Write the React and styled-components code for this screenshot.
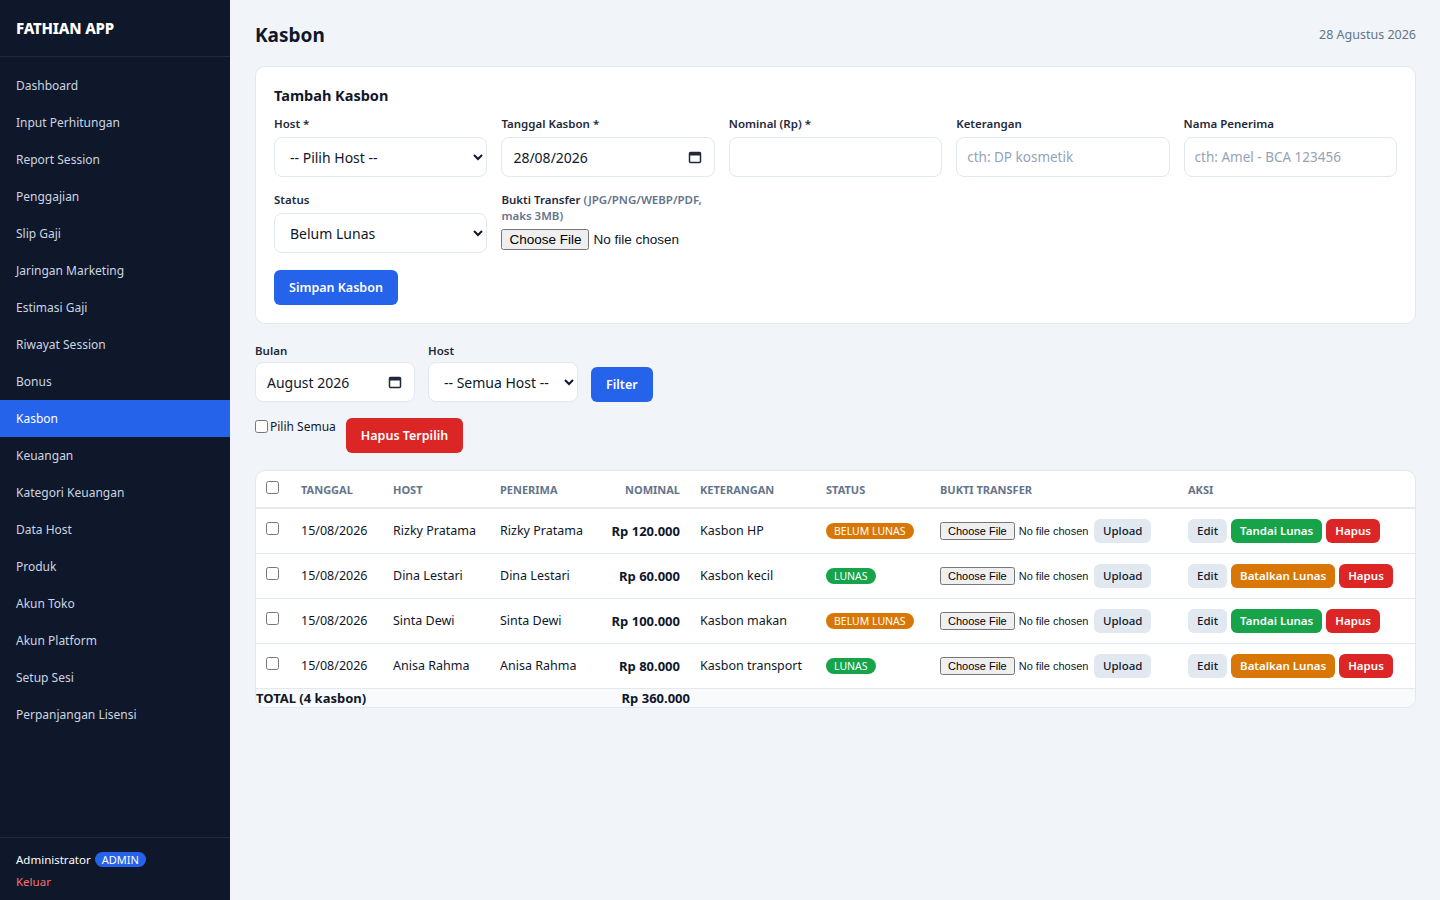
import React from "react";
import styled, { createGlobalStyle } from "styled-components";

const menu = [
  "Dashboard",
  "Input Perhitungan",
  "Report Session",
  "Penggajian",
  "Slip Gaji",
  "Jaringan Marketing",
  "Estimasi Gaji",
  "Riwayat Session",
  "Bonus",
  "Kasbon",
  "Keuangan",
  "Kategori Keuangan",
  "Data Host",
  "Produk",
  "Akun Toko",
  "Akun Platform",
  "Setup Sesi",
  "Perpanjangan Lisensi",
];

const rows = [
  { tgl: "15/08/2026", host: "Rizky Pratama", nominal: "Rp 120.000", ket: "Kasbon HP", lunas: false },
  { tgl: "15/08/2026", host: "Dina Lestari", nominal: "Rp 60.000", ket: "Kasbon kecil", lunas: true },
  { tgl: "15/08/2026", host: "Sinta Dewi", nominal: "Rp 100.000", ket: "Kasbon makan", lunas: false },
  { tgl: "15/08/2026", host: "Anisa Rahma", nominal: "Rp 80.000", ket: "Kasbon transport", lunas: true },
];

function CalendarIcon() {
  return (
    <svg width="14" height="14" viewBox="0 0 14 14">
      <rect x="1.5" y="2.5" width="11" height="10" rx="1" fill="none" stroke="#1f2937" strokeWidth="1.5" />
      <rect x="1.5" y="2.5" width="11" height="3" fill="#1f2937" />
    </svg>
  );
}

export default function App() {
  return (
    <>
      <GlobalStyle />
      <Layout>
        <Sidebar>
          <Brand>FATHIAN APP</Brand>
          <Nav>
            {menu.map((m) => (
              <NavItem key={m} $active={m === "Kasbon"}>
                {m}
              </NavItem>
            ))}
          </Nav>
          <SideFooter>
            <UserLine>
              Administrator <RoleBadge>ADMIN</RoleBadge>
            </UserLine>
            <Logout>Keluar</Logout>
          </SideFooter>
        </Sidebar>
        <Main>
          <TopBar>
            <h1>Kasbon</h1>
            <span>28 Agustus 2026</span>
          </TopBar>

          <Card>
            <CardTitle>Tambah Kasbon</CardTitle>
            <FormGrid>
              <Field>
                <Label>Host *</Label>
                <Select defaultValue="">
                  <option value="">-- Pilih Host --</option>
                </Select>
              </Field>
              <Field>
                <Label>Tanggal Kasbon *</Label>
                <DateBox>
                  <input readOnly value="28/08/2026" />
                  <CalendarIcon />
                </DateBox>
              </Field>
              <Field>
                <Label>Nominal (Rp) *</Label>
                <TextInput />
              </Field>
              <Field>
                <Label>Keterangan</Label>
                <TextInput placeholder="cth: DP kosmetik" />
              </Field>
              <Field>
                <Label>Nama Penerima</Label>
                <TextInput placeholder="cth: Amel - BCA 123456" />
              </Field>
              <Field>
                <Label>Status</Label>
                <Select defaultValue="belum">
                  <option value="belum">Belum Lunas</option>
                </Select>
              </Field>
              <Field>
                <Label>
                  Bukti Transfer <Hint>(JPG/PNG/WEBP/PDF, maks 3MB)</Hint>
                </Label>
                <FileInput type="file" $size={13.5} />
              </Field>
            </FormGrid>
            <PrimaryButton>Simpan Kasbon</PrimaryButton>
          </Card>

          <FilterRow>
            <Field $width={160} $gap={3}>
              <Label>Bulan</Label>
              <DateBox>
                <input readOnly value="August 2026" />
                <CalendarIcon />
              </DateBox>
            </Field>
            <Field $width={150} $gap={3}>
              <Label>Host</Label>
              <Select defaultValue="">
                <option value="">-- Semua Host --</option>
              </Select>
            </Field>
            <PrimaryButton>Filter</PrimaryButton>
          </FilterRow>

          <BulkRow>
            <CheckLabel>
              <input type="checkbox" /> Pilih Semua
            </CheckLabel>
            <DangerButton>Hapus Terpilih</DangerButton>
          </BulkRow>

          <TableCard>
            <Table>
              <colgroup>
                <col style={{ width: 35 }} />
                <col style={{ width: 92 }} />
                <col style={{ width: 107 }} />
                <col style={{ width: 105 }} />
                <col style={{ width: 95 }} />
                <col style={{ width: 126 }} />
                <col style={{ width: 114 }} />
                <col style={{ width: 248 }} />
                <col style={{ width: 238 }} />
              </colgroup>
              <thead>
                <tr>
                  <th><input type="checkbox" /></th>
                  <th>Tanggal</th>
                  <th>Host</th>
                  <th>Penerima</th>
                  <th className="right">Nominal</th>
                  <th>Keterangan</th>
                  <th>Status</th>
                  <th>Bukti Transfer</th>
                  <th>Aksi</th>
                </tr>
              </thead>
              <tbody>
                {rows.map((r, i) => (
                  <tr key={i}>
                    <td><input type="checkbox" /></td>
                    <td>{r.tgl}</td>
                    <td>{r.host}</td>
                    <td>{r.host}</td>
                    <td className="right"><b>{r.nominal}</b></td>
                    <td>{r.ket}</td>
                    <td>
                      <StatusBadge $lunas={r.lunas}>{r.lunas ? "LUNAS" : "BELUM LUNAS"}</StatusBadge>
                    </td>
                    <td>
                      <Inline>
                        <FileInput type="file" $size={11} />
                        <SmallButton $kind="light">Upload</SmallButton>
                      </Inline>
                    </td>
                    <td>
                      <Inline>
                        <SmallButton $kind="light">Edit</SmallButton>
                        {r.lunas ? (
                          <SmallButton $kind="warn">Batalkan Lunas</SmallButton>
                        ) : (
                          <SmallButton $kind="ok">Tandai Lunas</SmallButton>
                        )}
                        <SmallButton $kind="danger">Hapus</SmallButton>
                      </Inline>
                    </td>
                  </tr>
                ))}
              </tbody>
              <tfoot>
                <tr>
                  <td colSpan={4}>TOTAL (4 kasbon)</td>
                  <td className="right">Rp 360.000</td>
                  <td colSpan={4}></td>
                </tr>
              </tfoot>
            </Table>
          </TableCard>
        </Main>
      </Layout>
    </>
  );
}

const GlobalStyle = createGlobalStyle`
  * { box-sizing: border-box; }
  body {
    margin: 0;
    font-family: "Noto Sans", "Open Sans", sans-serif;
    color: #0f172a;
    background: #f1f5f9;
  }
`;
const Layout = styled.div`
  display: flex;
  min-height: 100vh;
`;
const Sidebar = styled.aside`
  width: 230px;
  flex-shrink: 0;
  background: #0f172a;
  display: flex;
  flex-direction: column;
`;
const Brand = styled.div`
  height: 57px;
  padding: 0 16px;
  display: flex;
  align-items: center;
  color: #fff;
  font-size: 15px;
  font-weight: 800;
  letter-spacing: -0.2px;
  border-bottom: 1px solid #1e293b;
`;
const Nav = styled.nav`
  padding-top: 10px;
  display: flex;
  flex-direction: column;
`;
const NavItem = styled.a`
  display: block;
  height: 37px;
  line-height: 37px;
  padding: 0 16px;
  font-size: 12px;
  color: ${(p) => (p.$active ? "#fff" : "#cbd5e1")};
  background: ${(p) => (p.$active ? "#2563eb" : "transparent")};
`;
const SideFooter = styled.div`
  margin-top: auto;
  height: 63px;
  border-top: 1px solid #1e293b;
  padding: 11px 16px 0;
`;
const UserLine = styled.div`
  color: #fff;
  font-size: 11.5px;
  display: flex;
  align-items: center;
  gap: 4px;
  height: 20px;
`;
const RoleBadge = styled.span`
  background: #2563eb;
  color: #fff;
  font-size: 11px;
  line-height: 15px;
  padding: 0 7px;
  border-radius: 999px;
`;
const Logout = styled.div`
  color: #f87171;
  font-size: 11.5px;
  line-height: 16px;
  margin-top: 5px;
`;
const Main = styled.main`
  flex: 1;
  padding: 20px 24px 24px 25px;
  min-width: 0;
`;
const TopBar = styled.div`
  display: flex;
  justify-content: space-between;
  align-items: center;
  height: 30px;
  margin-bottom: 16px;
  h1 {
    margin: 0;
    font-size: 19px;
    font-weight: 700;
  }
  span {
    color: #64748b;
    font-size: 12.5px;
    margin-top: -2px;
  }
`;
const Card = styled.section`
  background: #fff;
  border: 1px solid #e2e8f0;
  border-radius: 10px;
  padding: 18px 18px 18px;
  margin-bottom: 19px;
`;
const CardTitle = styled.h2`
  margin: 0 0 11px;
  font-size: 14.5px;
  font-weight: 700;
  line-height: 20px;
`;
const FormGrid = styled.div`
  display: grid;
  grid-template-columns: repeat(5, minmax(0, 1fr));
  gap: 15px 14px;
  margin-bottom: 17px;
`;
const Field = styled.div`
  display: flex;
  flex-direction: column;
  gap: ${(p) => (p.$gap !== undefined ? p.$gap : 5)}px;
  min-width: 0;
  width: ${(p) => (p.$width ? p.$width + "px" : "auto")};
`;
const Label = styled.label`
  font-size: 11.5px;
  font-weight: 600;
  line-height: 16px;
  color: #1e293b;
`;
const Hint = styled.span`
  color: #64748b;
`;
const inputBase = `
  width: 100%;
  height: 40px;
  border: 1px solid #e2e8f0;
  border-radius: 8px;
  background: #fff;
  font-family: "Noto Sans", "Open Sans", sans-serif;
  font-size: 14px;
  color: #0f172a;
`;
const Select = styled.select`
  ${inputBase}
  padding: 0 8px 0 11px;
`;
const TextInput = styled.input`
  ${inputBase}
  padding: 0 10px;
  font-size: 13.5px;
  &::placeholder {
    color: #94a3b8;
  }
`;
const DateBox = styled.div`
  ${inputBase}
  display: flex;
  align-items: center;
  padding: 0 12px 0 11px;
  input {
    flex: 1;
    min-width: 0;
    border: 0;
    outline: 0;
    font: inherit;
    color: inherit;
    background: transparent;
    padding: 0;
  }
`;
const FileInput = styled.input`
  font-size: ${(p) => p.$size}px;
  font-family: Arial, "Liberation Sans", sans-serif;
  width: ${(p) => (p.$size > 12 ? 200 : 150)}px;
`;
const PrimaryButton = styled.button`
  background: #2563eb;
  color: #fff;
  border: 0;
  border-radius: 6px;
  height: 35px;
  padding: 0 15px;
  font-family: inherit;
  font-size: 12.5px;
  font-weight: 600;
`;
const DangerButton = styled(PrimaryButton)`
  background: #dc2626;
`;
const FilterRow = styled.div`
  display: flex;
  align-items: flex-end;
  gap: 13px;
  margin-bottom: 16px;
`;
const BulkRow = styled.div`
  display: flex;
  align-items: flex-start;
  gap: 10px;
  margin-bottom: 17px;
`;
const CheckLabel = styled.label`
  font-size: 12px;
  display: flex;
  align-items: center;
  gap: 2px;
  input {
    margin: 0;
  }
`;
const TableCard = styled.div`
  background: #fff;
  border: 1px solid #e2e8f0;
  border-radius: 10px;
  overflow: hidden;
`;
const Table = styled.table`
  width: 100%;
  table-layout: fixed;
  border-collapse: collapse;
  font-size: 12.5px;
  th,
  td {
    padding: 0 10px;
    text-align: left;
    white-space: nowrap;
  }
  .right {
    text-align: right;
  }
  th {
    height: 37px;
    font-size: 11px;
    font-weight: 700;
    color: #64748b;
    text-transform: uppercase;
    border-bottom: 2px solid #e2e8f0;
  }
  tbody td {
    height: 45px;
    border-bottom: 1px solid #e2e8f0;
  }
  input[type="checkbox"] {
    margin: 0;
  }
  b {
    font-size: 13px;
    font-weight: 700;
  }
  tfoot td {
    height: 19px;
    padding: 0;
    font-size: 13px;
    font-weight: 700;
    background: #f8fafc;
  }
`;
const StatusBadge = styled.span`
  display: inline-block;
  background: ${(p) => (p.$lunas ? "#16a34a" : "#d97706")};
  color: #fff;
  font-size: 10.5px;
  line-height: 16px;
  padding: 0 8px;
  border-radius: 999px;
`;
const Inline = styled.div`
  display: flex;
  align-items: center;
  gap: 4px;
`;
const kinds = {
  light: ["#e2e8f0", "#0f172a", 500],
  ok: ["#16a34a", "#fff", 600],
  warn: ["#d97706", "#fff", 600],
  danger: ["#dc2626", "#fff", 600],
};
const SmallButton = styled.button`
  background: ${(p) => kinds[p.$kind][0]};
  color: ${(p) => kinds[p.$kind][1]};
  font-weight: ${(p) => kinds[p.$kind][2]};
  border: 0;
  border-radius: 6px;
  height: 24px;
  padding: 0 9px;
  font-family: inherit;
  font-size: 11.5px;
`;
